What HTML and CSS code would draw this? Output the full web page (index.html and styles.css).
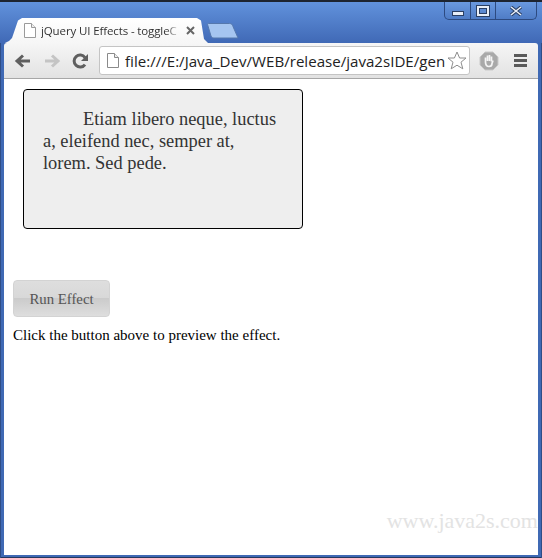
FILE: index.html
```html
<!DOCTYPE html>
<html lang="en">
<head>
<meta charset="utf-8">
<title>jQuery UI Effects - toggleClass</title>
<link rel="stylesheet" href="styles.css">
</head>
<body>
<div class="window">
  <div class="frame-top">
    <div class="tab">
      <svg class="page-icon" width="12" height="15" viewBox="0 0 12 15"><path d="M.5.5h7l4 4v10H.5z" fill="#fff" stroke="#9a9a9a"/><path d="M7.5.5v4h4" fill="#eee" stroke="#9a9a9a"/></svg>
      <span class="tab-title">jQuery UI Effects - toggleC</span>
      <svg class="tab-close" width="9" height="9" viewBox="0 0 9 9"><path d="M1 1l7 7M8 1L1 8" stroke="#666" stroke-width="2"/></svg>
    </div>
    <svg class="new-tab" width="32" height="16" viewBox="0 0 32 16"><path d="M1.500.5h21c2 0 3 1 3.500 3l5 11.500H7c-1.500 0-2.300-.5-3-2L.7 2C.4 1 .6.500 1.500.5z" fill="#a5c5f0" stroke="#5578ad"/></svg>
    <div class="controls">
      <div class="ctl ctl-min"><i></i></div>
      <div class="ctl ctl-max"><i></i></div>
      <div class="ctl ctl-close">
        <svg width="14" height="10" viewBox="0 0 14 10"><path d="M2 1l10 8M12 1L2 9" stroke="#2b3f63" stroke-width="3.500"/><path d="M2 1l10 8M12 1L2 9" stroke="#e8eef8" stroke-width="1.600"/></svg>
      </div>
    </div>
  </div>
  <div class="toolbar">
    <svg class="tool" width="18" height="16" viewBox="0 0 18 16"><path d="M16 8H4M9 2.500L3 8l6 5.500" fill="none" stroke="#5f5f5f" stroke-width="3"/></svg>
    <svg class="tool" width="18" height="16" viewBox="0 0 18 16"><path d="M2 8h12M9 2.500L15 8l-6 5.500" fill="none" stroke="#c4c4c4" stroke-width="3"/></svg>
    <svg class="tool" width="17" height="16" viewBox="0 0 17 16"><path d="M13 11.500A6 6 0 1 1 13 4.500" fill="none" stroke="#5f5f5f" stroke-width="3"/><path d="M16 1v7H9z" fill="#5f5f5f"/></svg>
    <div class="omnibox">
      <svg class="omni-page" width="12" height="15" viewBox="0 0 12 15"><path d="M.5.5h7l4 4v10H.5z" fill="#fff" stroke="#8a8a8a"/><path d="M7.500.5v4h4" fill="#eee" stroke="#8a8a8a"/></svg>
      <span class="url">file:///E:/Java_Dev/WEB/release/java2sIDE/gen</span>
      <svg class="star" width="20" height="19" viewBox="0 0 20 19"><path d="M10 1l2.600 6h6.400l-5 4.200 1.800 6.600L10 14.200l-5.800 3.600L6 11.200 1 7h6.400z" fill="#fff" stroke="#8d8d8d"/></svg>
    </div>
    <svg class="stop" width="20" height="20" viewBox="0 0 20 20"><path d="M6 1h8l5 5v8l-5 5H6l-5-5V6z" fill="#a9a9a9" stroke="#c9c9c9"/><path d="M6.500 11V6.500M8.500 10V4.500M10.500 10V4M12.500 10.500V5.500M6.500 11c0 3 1.500 4.500 3.500 4.500s3-1 3-3l1-3" fill="none" stroke="#f4f4f4" stroke-width="1.700"/></svg>
    <div class="menu"><i></i><i></i><i></i></div>
  </div>
  <main class="content">
    <div class="effect">
      <p>Etiam libero neque, luctus a, eleifend nec, semper at, lorem. Sed pede.</p>
    </div>
    <a class="run">Run Effect</a>
    <p class="hint">Click the button above to preview the effect.</p>
    <div class="watermark">www.java2s.com</div>
  </main>
</div>
</body>
</html>
```
FILE: styles.css
```css
* { box-sizing: border-box; }
html, body { margin: 0; padding: 0; }
body { width: 542px; height: 558px; overflow: hidden; background: #fff; }
.window {
  width: 542px; height: 558px;
  display: flex; flex-direction: column;
  padding: 0 4px 3px;
  background: #3f69b4;
  border-top: 2px solid #1d2430;
  box-shadow: inset 1px 0 #2f4d86, inset -1px 0 #2f4d86, inset 0 -1px #22375f;
  overflow: hidden;
}
.frame-top {
  position: relative;
  height: 41px; flex: none;
  margin: 0 -4px;
  padding-left: 5px;
  display: flex; align-items: flex-end;
  background: linear-gradient(#6192dc, #4069b6);
}
.tab {
  width: 203px; height: 25px;
  padding: 0 13px 0 19px;
  display: flex; align-items: center;
  background: linear-gradient(#fff, #f6f6f6);
  clip-path: polygon(0 100%, 4px 92%, 7px 80%, 13px 10%, 17px 0, 192px 0, 196px 10%, 199px 84%, 203px 100%);
}
.page-icon { flex: none; margin-right: 5px; }
.tab-title {
  flex: 1; overflow: hidden; white-space: nowrap;
  font: 11.5px "Open Sans", "Liberation Sans", sans-serif;
  letter-spacing: -.12px;
  color: #333;
  -webkit-mask-image: linear-gradient(90deg, #000 90%, transparent);
  mask-image: linear-gradient(90deg, #000 90%, transparent);
}
.tab-close { flex: none; margin-left: 6px; }
.new-tab { flex: none; margin: 0 0 4px -1px; }
.controls {
  position: absolute; top: 0; right: 5px;
  width: 93px; height: 18px;
  display: flex;
  border: 1px solid #2d4a80; border-top: 0;
  border-radius: 0 0 5px 5px;
  background: linear-gradient(#6a99df, #4f7cc6);
}
.ctl { display: flex; align-items: center; justify-content: center; border-right: 1px solid #2d4a80; }
.ctl-min { width: 26px; }
.ctl-max { width: 25px; }
.ctl-close { flex: 1; border-right: 0; }
.ctl-min i { width: 12px; height: 5px; margin-top: 6px; background: #e8eef8; border: 1px solid #2b3f63; }
.ctl-max i { width: 12px; height: 10px; border: 2px solid #e8eef8; outline: 1px solid #2b3f63; outline-offset: -3px; box-shadow: 0 0 0 1px #2b3f63; }
.toolbar {
  height: 36px; flex: none;
  padding: 0 10px;
  display: flex; align-items: center;
  background: linear-gradient(#f6f6f6, #e2e2e2);
  border-bottom: 1px solid #a7a7a7;
  border-radius: 3px 3px 0 0;
}
.tool { flex: none; margin-right: 11px; }
.omnibox {
  width: 371px; height: 29px;
  margin-left: -1px;
  padding: 0 2px 0 7px;
  display: flex; align-items: center;
  background: #fff;
  border: 1px solid #c4c4c4;
  border-radius: 3px;
}
.omni-page { flex: none; margin-right: 6px; }
.url {
  flex: 1; overflow: hidden; white-space: nowrap;
  font: 15.1px "Open Sans", "Liberation Sans", sans-serif;
  color: #222;
}
.star { flex: none; margin-left: 2px; }
.stop { flex: none; margin-left: 9px; }
.menu { flex: none; width: 13px; margin-left: 15px; display: flex; flex-direction: column; gap: 2px; }
.menu i { height: 3px; background: #5a5a5a; }
.content {
  position: relative;
  flex: 1;
  padding: 10px 0 0 9px;
  background: #fff;
  font: 15px "Liberation Serif", "Times New Roman", serif;
  color: #000;
}
.effect {
  width: 280px; height: 140px;
  margin-left: 10px;
  padding: 18px 23px 0 19px;
  background: #eee;
  border: 1px solid #000;
  border-radius: 4px;
}
.effect p {
  margin: 0;
  font-size: 18.4px; line-height: 22px;
  color: #333;
  text-indent: 40px;
}
.run {
  display: block;
  width: 97px; height: 37px;
  margin-top: 51px;
  border: 1px solid #d3d3d3;
  border-radius: 4px;
  background: linear-gradient(#dedede 0, #d8d8d8 50%, #cbcbcb 50%, #dedede 100%);
  color: #555;
  font-size: 14.8px; line-height: 36px; text-align: center;
}
.hint { margin: 9px 0 0; line-height: 18px; }
.watermark {
  position: absolute; right: 0; bottom: 22px;
  font-size: 22px; line-height: 25px;
  color: #e3e3e3; white-space: nowrap;
}
```
